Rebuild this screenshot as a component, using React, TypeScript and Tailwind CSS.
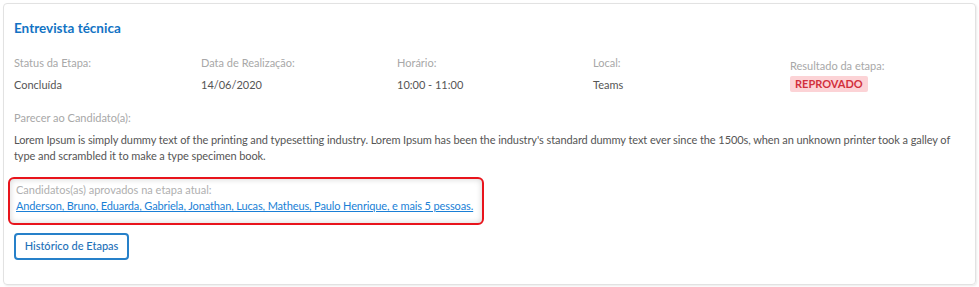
import { useState } from 'react';

const fields = [
  { label: 'Status da Etapa:', value: 'Concluída', width: 'w-[187px]' },
  { label: 'Data de Realização:', value: '14/06/2020', width: 'w-[196px]' },
  { label: 'Horário:', value: '10:00 - 11:00', width: 'w-[196px]' },
  { label: 'Local:', value: 'Teams', width: 'w-[197px]' },
];

export default function App() {
  const [showHistory, setShowHistory] = useState(false);

  return (
    <div className="w-[979px] h-[287px] bg-white p-[3px] font-['Lato',sans-serif]">
      <div className="h-[282px] w-[973px] rounded-[4px] border border-[#e2e2e2] shadow-[1px_1px_2px_rgba(0,0,0,0.08)] px-[10px] pt-[14px]">
        <h2 className="text-[13.5px] font-bold text-[#1273c4] leading-5">Entrevista técnica</h2>

        <div className="mt-[17px] flex">
          {fields.map((f) => (
            <div key={f.label} className={f.width}>
              <div className="text-[11px] leading-4 text-[#a8a8a8]">{f.label}</div>
              <div className="mt-[6px] text-[11px] leading-4 text-[#555]">{f.value}</div>
            </div>
          ))}
          <div className="pt-[3px]">
            <div className="text-[11px] leading-4 text-[#a8a8a8]">Resultado da etapa:</div>
            <div className="mt-[2px] w-fit rounded-[2px] bg-[#fcd3d6] px-[5px] text-[11px] font-bold leading-4 text-[#d2303d]">
              REPROVADO
            </div>
          </div>
        </div>

        <div className="mt-[17px] text-[11px] leading-4 text-[#a8a8a8]">Parecer ao Candidato(a):</div>
        <p className="mt-[6px] w-[951px] text-[11px] leading-4 tracking-[-0.08px] text-[#555]">
          Lorem Ipsum is simply dummy text of the printing and typesetting industry. Lorem Ipsum has been the industry's standard dummy text ever since the 1500s, when an unknown printer took a galley of type and scrambled it to make a type specimen book.
        </p>

        <div className="-ml-[6px] mt-[13px] h-[48px] w-[476px] rounded-[6px] border-2 border-[#e8141c] px-[6px] pt-[3px] shadow-[inset_0_0_6px_rgba(0,0,0,0.18)]">
          <div className="text-[11px] leading-4 text-[#b0b0b0]">Candidatos(as) aprovados na etapa atual:</div>
          <a href="#" className="block whitespace-nowrap text-[11px] leading-4 tracking-[-0.12px] text-[#1a7fd6] underline">
            Anderson, Bruno, Eduarda, Gabriela, Jonathan, Lucas, Matheus, Paulo Henrique, e mais 5 pessoas.
          </a>
        </div>

        <button
          onClick={() => setShowHistory(!showHistory)}
          className="mt-[8px] h-[27px] w-[115px] rounded-[4px] border-2 border-[#2680c9] text-[11px] font-medium text-[#1d70b8]"
        >
          Histórico de Etapas
        </button>
      </div>
    </div>
  );
}
